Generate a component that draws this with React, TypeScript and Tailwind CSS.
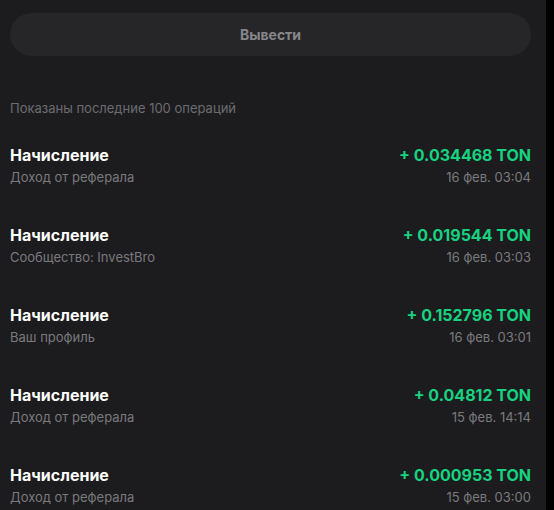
import React from "react";

const rows = [
  { sub: "Доход от реферала", amount: "+ 0.034468 TON", date: "16 фев. 03:04" },
  { sub: "Сообщество: InvestBro", amount: "+ 0.019544 TON", date: "16 фев. 03:03" },
  { sub: "Ваш профиль", amount: "+ 0.152796 TON", date: "16 фев. 03:01" },
  { sub: "Доход от реферала", amount: "+ 0.04812 TON", date: "15 фев. 14:14" },
  { sub: "Доход от реферала", amount: "+ 0.000953 TON", date: "15 фев. 03:00" },
];

export default function App() {
  return (
    <div className="flex h-[510px] w-[554px] overflow-hidden bg-black">
      <div
        className="w-[546px] bg-[#1c1c1e] pl-[10px] pr-[15px] pt-[13px]"
        style={{ fontFamily: 'Inter, "Open Sans", sans-serif' }}
      >
        <button className="flex h-[43px] w-full items-center justify-center rounded-full bg-[#262628] text-[14px] font-bold text-[#87878b]">
          Вывести
        </button>
        <div className="mt-[43px] text-[13px] leading-[18px] text-[#6c6c70]">
          Показаны последние 100 операций
        </div>
        <div className="mt-[27px] flex flex-col gap-[36px]">
          {rows.map((r, i) => (
            <div key={i} className="flex items-start justify-between">
              <div className="flex flex-col">
                <span className="text-[16px] font-bold leading-[22px] text-white">Начисление</span>
                <span className="text-[13px] leading-[22px] text-[#7a7a7e]">{r.sub}</span>
              </div>
              <div className="flex flex-col items-end">
                <span className="text-[16px] font-bold leading-[22px] text-[#17d381]">{r.amount}</span>
                <span className="text-[13px] leading-[22px] text-[#7a7a7e]">{r.date}</span>
              </div>
            </div>
          ))}
        </div>
      </div>
    </div>
  );
}
